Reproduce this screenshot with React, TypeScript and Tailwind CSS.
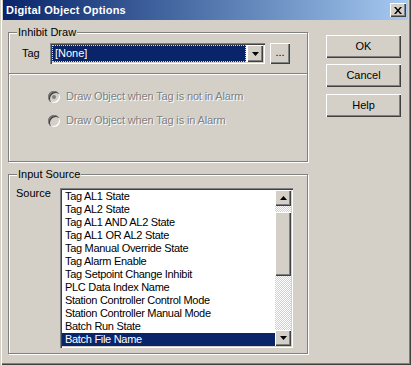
import React from 'react';

const raised =
  'shadow-[inset_1px_1px_0_#fff,inset_-1px_-1px_0_#404040,inset_-2px_-2px_0_#808080]';
const sunken =
  'shadow-[inset_1px_1px_0_#808080,inset_2px_2px_0_#404040,inset_-1px_-1px_0_#fff,inset_-2px_-2px_0_#d4d0c8]';
const etched = 'border border-[#808080] shadow-[inset_1px_1px_0_#fff,1px_1px_0_#fff]';
const dither =
  'bg-[repeating-conic-gradient(#fff_0_25%,#d4d0c8_0_50%)] bg-[length:2px_2px]';

const sources = [
  'Tag AL1 State',
  'Tag AL2 State',
  'Tag AL1 AND AL2 State',
  'Tag AL1 OR AL2 State',
  'Tag Manual Override State',
  'Tag Alarm Enable',
  'Tag Setpoint Change Inhibit',
  'PLC Data Index Name',
  'Station Controller Control Mode',
  'Station Controller Manual Mode',
  'Batch Run State',
  'Batch File Name',
];

const Arrow = ({ down }: { down?: boolean }) => (
  <svg width="7" height="4" viewBox="0 0 7 4">
    <path d={down ? 'M0 0h7L3.5 4z' : 'M0 4h7L3.5 0z'} fill="#000" />
  </svg>
);

const Group = ({ label, className, children }: { label: string; className: string; children: React.ReactNode }) => (
  <div className={`relative ${etched} ${className}`}>
    <span className="absolute -top-[7px] left-[8px] px-[1px] bg-[#d4d0c8] leading-[13px]">{label}</span>
    {children}
  </div>
);

const Radio = ({ checked, label }: { checked?: boolean; label: string }) => (
  <div className="flex items-center h-[13px]">
    <div className={`w-[12px] h-[12px] rounded-full bg-[#d4d0c8] flex items-center justify-center ${sunken}`}>
      {checked && <div className="w-[4px] h-[4px] rounded-full bg-[#808080]" />}
    </div>
    <span className="ml-[6px] text-[#808080] tracking-[-0.15px] [text-shadow:1px_1px_0_#fff]">{label}</span>
  </div>
);

const Button = ({ label, className = '' }: { label: string; className?: string }) => (
  <button className={`w-[75px] h-[23px] bg-[#d4d0c8] flex items-center justify-center ${raised} ${className}`}>
    {label}
  </button>
);

export default function App() {
  return (
    <div
      className="w-[411px] h-[365px] bg-[#d4d0c8] px-[3px] pb-[3px] text-[11px] leading-[13px] text-black shadow-[inset_1px_0_0_#d4d0c8,inset_2px_0_0_#fff,inset_-1px_-1px_0_#404040,inset_-2px_-2px_0_#808080]"
      style={{ fontFamily: '"Liberation Sans", Arial, sans-serif' }}
    >
      <div className="h-[20px] bg-gradient-to-r from-[#0a246a] to-[#a6caf0] flex items-center justify-between pl-[3px] pr-[2px]">
        <span className="text-white font-bold text-[11px] tracking-[0.2px]">Digital Object Options</span>
        <div className={`w-[16px] h-[14px] bg-[#d4d0c8] flex items-center justify-center ${raised}`}>
          <svg width="8" height="7" viewBox="0 0 8 7">
            <path d="M0 0h2l2 2.5L6 0h2L5 3.5 8 7H6L4 4.5 2 7H0l3-3.5z" fill="#000" />
          </svg>
        </div>
      </div>

      <div className="flex">
        <div className="ml-[5px] w-[300px] flex flex-col">
          <Group label="Inhibit Draw" className="mt-[12px] h-[130px]">
            <div className="flex items-center pl-[13px] pt-[10px]">
              <span className="w-[28px]">Tag</span>
              <div className={`w-[215px] h-[21px] bg-white p-[2px] flex ${sunken}`}>
                <div className="flex-1 bg-[#0a246a] border border-dotted border-[#f5d98a] text-white pl-[2px] leading-[15px] mr-[1px]">
                  [None]
                </div>
                <div className={`w-[16px] h-[17px] bg-[#d4d0c8] flex items-center justify-center ${raised}`}>
                  <Arrow down />
                </div>
              </div>
              <button className={`ml-[5px] w-[20px] h-[21px] bg-[#d4d0c8] flex items-center justify-center pb-[3px] ${raised}`}>
                ...
              </button>
            </div>
            <div className="mt-[9px] border-t border-[#808080] shadow-[inset_0_1px_0_#fff] pl-[39px] pt-[16px] flex flex-col gap-[11px]">
              <Radio checked label="Draw Object when Tag is not in Alarm" />
              <Radio label="Draw Object when Tag is in Alarm" />
            </div>
          </Group>

          <Group label="Input Source" className="mt-[12px] h-[180px]">
            <div className="flex pl-[7px] pt-[12px]">
              <span className="w-[44px]">Source</span>
              <div className={`mt-[1px] w-[233px] h-[160px] bg-white p-[2px] flex ${sunken}`}>
                <div className="flex-1 flex flex-col">
                  {sources.map((s, i) => (
                    <div
                      key={s}
                      className={`h-[13px] pl-[3px] leading-[13px] whitespace-nowrap tracking-[-0.3px] ${
                        i === sources.length - 1 ? 'bg-[#0a246a] text-white' : ''
                      }`}
                    >
                      {s}
                    </div>
                  ))}
                </div>
                <div className={`w-[16px] flex flex-col ${dither}`}>
                  <div className={`h-[16px] bg-[#d4d0c8] flex items-center justify-center ${raised}`}>
                    <Arrow />
                  </div>
                  <div className={`mt-[6px] h-[64px] bg-[#d4d0c8] ${raised}`} />
                  <div className="flex-1" />
                  <div className={`h-[16px] bg-[#d4d0c8] flex items-center justify-center ${raised}`}>
                    <Arrow down />
                  </div>
                </div>
              </div>
            </div>
          </Group>
        </div>

        <div className="ml-[18px] mt-[15px] flex flex-col">
          <Button label="OK" />
          <Button label="Cancel" className="mt-[6px]" />
          <Button label="Help" className="mt-[7px]" />
        </div>
      </div>
    </div>
  );
}
